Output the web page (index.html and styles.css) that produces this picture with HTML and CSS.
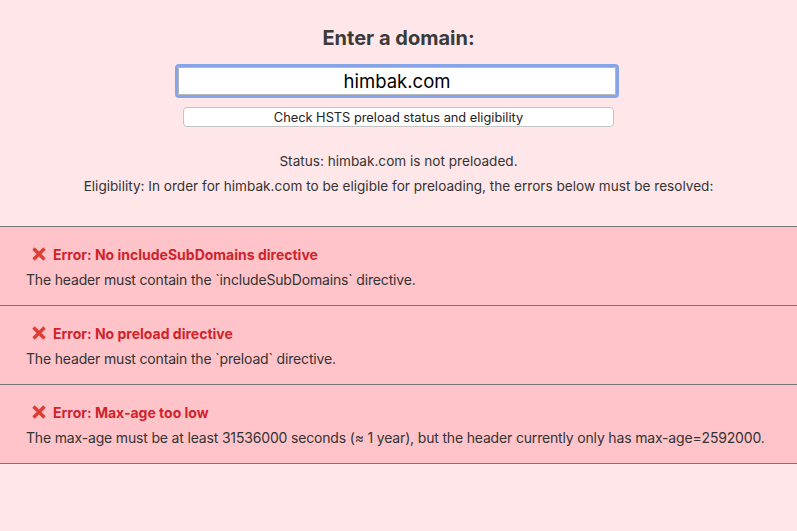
FILE: index.html
```html
<!DOCTYPE html>
<html>
<head>
<meta charset="utf-8">
<link rel="stylesheet" href="styles.css">
</head>
<body>
<div class="top">
  <h1 class="title">Enter a domain:</h1>
  <input class="domain" type="text" value="himbak.com">
  <button class="check">Check HSTS preload status and eligibility</button>
  <p class="status">Status: himbak.com is not preloaded.</p>
  <p class="elig">Eligibility: In order for himbak.com to be eligible for preloading, the errors below must be resolved:</p>
</div>
<div class="errors">
  <div class="err">
    <div class="err-title"><svg class="x" viewBox="0 0 16 16"><path d="M2.5 2.5 L13.5 13.5 M13.5 2.5 L2.5 13.5" stroke="#de3d33" stroke-width="3.4" stroke-linecap="butt"/></svg>Error: No includeSubDomains directive</div>
    <div class="err-desc">The header must contain the `includeSubDomains` directive.</div>
  </div>
  <div class="err">
    <div class="err-title"><svg class="x" viewBox="0 0 16 16"><path d="M2.5 2.5 L13.5 13.5 M13.5 2.5 L2.5 13.5" stroke="#de3d33" stroke-width="3.4" stroke-linecap="butt"/></svg>Error: No preload directive</div>
    <div class="err-desc">The header must contain the `preload` directive.</div>
  </div>
  <div class="err">
    <div class="err-title"><svg class="x" viewBox="0 0 16 16"><path d="M2.5 2.5 L13.5 13.5 M13.5 2.5 L2.5 13.5" stroke="#de3d33" stroke-width="3.4" stroke-linecap="butt"/></svg>Error: Max-age too low</div>
    <div class="err-desc">The max-age must be at least 31536000 seconds (≈ 1 year), but the header currently only has max-age=2592000.</div>
  </div>
</div>
</body>
</html>
```

FILE: styles.css
```css
html, body {
  margin: 0;
  padding: 0;
  background: #ffe6e9;
  font-family: Inter, "Liberation Sans", sans-serif;
  color: #333;
}
.top {
  display: flex;
  flex-direction: column;
  align-items: center;
  padding-top: 24px;
}
.title {
  margin: 0;
  font-size: 20px;
  line-height: 28px;
  font-weight: 700;
  color: #3a3a3a;
}
.domain {
  margin-top: 15px;
  margin-right: 3px;
  box-sizing: border-box;
  width: 438px;
  height: 28px;
  border: 1px solid #b8b8b8;
  border-radius: 1px;
  outline: 3px solid #86a4e8;
  outline-offset: 0;
  background: #fff;
  font-family: Inter, "Liberation Sans", sans-serif;
  font-size: 18.5px;
  text-align: center;
  color: #000;
  padding: 0;
}
.check {
  margin-top: 12px;
  box-sizing: border-box;
  width: 431px;
  height: 20px;
  background: #fff;
  border: 1px solid #c4c4c4;
  border-radius: 4px;
  font-family: Inter, "Liberation Sans", sans-serif;
  font-size: 12.8px;
  color: #222;
  padding: 0;
}
.status, .elig {
  margin: 0;
  font-size: 13.6px;
  line-height: 18px;
  color: #333;
}
.status { margin-top: 25px; }
.elig { margin-top: 7px; }
.errors {
  margin-top: 31px;
  border-bottom: 1px solid #777;
}
.err {
  background: #ffc4c9;
  border-top: 1px solid #777;
  padding: 17px 26px 15px;
}
.err-title {
  display: flex;
  align-items: center;
  height: 20px;
  font-size: 14px;
  font-weight: 700;
  color: #d0232b;
  padding-left: 5px;
}
.x {
  width: 16px;
  height: 16px;
  margin-right: 6px;
}
.err-desc {
  margin-top: 6px;
  font-size: 14px;
  line-height: 20px;
  letter-spacing: -0.17px;
  color: #333;
}
```
